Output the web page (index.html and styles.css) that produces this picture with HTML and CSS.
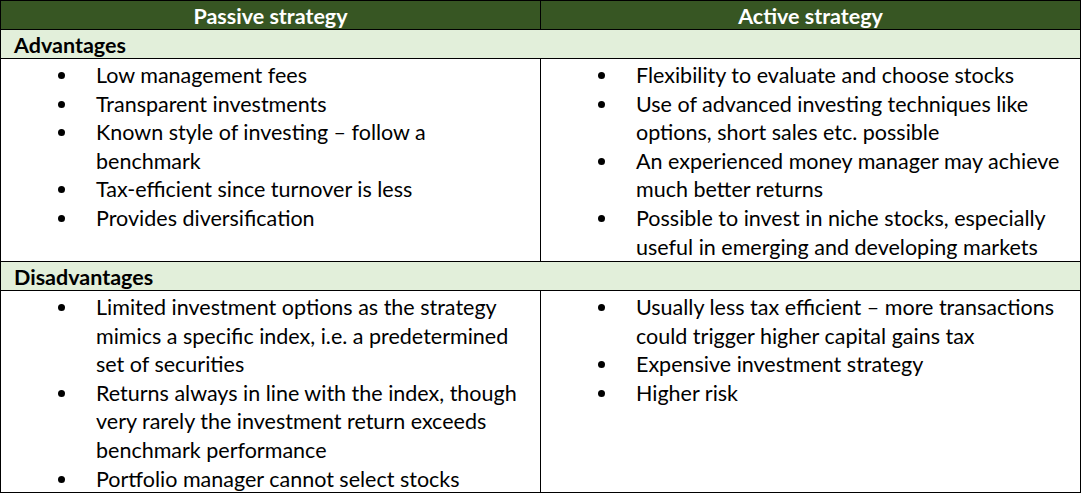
FILE: index.html
```html
<!DOCTYPE html>
<html lang="en">
<head>
<meta charset="utf-8">
<title>Passive vs Active strategy</title>
<link rel="stylesheet" href="styles.css">
</head>
<body>
<div class="grid">
  <div class="head">Passive strategy</div>
  <div class="head">Active strategy</div>
  <div class="section">Advantages</div>
  <div class="cell">
    <ul class="list">
      <li>Low management fees</li>
      <li>Transparent investments</li>
      <li>Known style of investing – follow a benchmark</li>
      <li>Tax-efficient since turnover is less</li>
      <li>Provides diversification</li>
    </ul>
  </div>
  <div class="cell">
    <ul class="list">
      <li>Flexibility to evaluate and choose stocks</li>
      <li>Use of advanced investing techniques like options, short sales etc. possible</li>
      <li>An experienced money manager may achieve much better returns</li>
      <li>Possible to invest in niche stocks, especially useful in emerging and developing markets</li>
    </ul>
  </div>
  <div class="section">Disadvantages</div>
  <div class="cell">
    <ul class="list">
      <li>Limited investment options as the strategy mimics a specific index, i.e. a predetermined set of securities</li>
      <li>Returns always in line with the index, though very rarely the investment return exceeds benchmark performance</li>
      <li>Portfolio manager cannot select stocks</li>
    </ul>
  </div>
  <div class="cell">
    <ul class="list">
      <li>Usually less tax efficient – more transactions could trigger higher capital gains tax</li>
      <li>Expensive investment strategy</li>
      <li>Higher risk</li>
    </ul>
  </div>
</div>
</body>
</html>
```
FILE: styles.css
```css
html, body {
  margin: 0;
  padding: 0;
  background: #fff;
}
body {
  font-family: Lato, "Liberation Sans", sans-serif;
  font-size: 21.5px;
  color: #000;
}
.grid {
  display: grid;
  grid-template-columns: 539px 539px;
  grid-template-rows: 28px 28px 202px 28px 201px;
  gap: 1px;
  background: #000;
  border: 1px solid #000;
  width: 1079px;
}
.head {
  background: #375623;
  color: #fff;
  font-weight: bold;
  display: flex;
  align-items: center;
  justify-content: center;
  line-height: 28px;
  padding-top: 1px;
}
.section {
  grid-column: 1 / span 2;
  background: #e2efda;
  font-weight: bold;
  padding-left: 13px;
  line-height: 28px;
  padding-top: 1px;
}
.cell {
  background: #fff;
  overflow: hidden;
}
.list {
  list-style: none;
  margin: 0;
  padding: 2px 12px 0 95px;
  line-height: 28.6px;
}
.list li {
  position: relative;
}
.list li::before {
  content: "";
  position: absolute;
  left: -38px;
  top: 11px;
  width: 7px;
  height: 7px;
  border-radius: 50%;
  background: #000;
}
```
